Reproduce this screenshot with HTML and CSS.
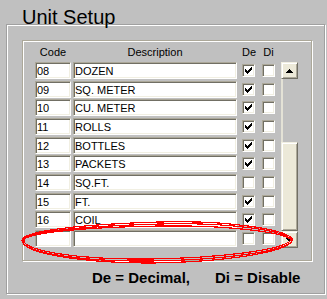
FILE: index.html
```html
<!DOCTYPE html>
<html>
<head>
<meta charset="utf-8">
<link rel="stylesheet" href="styles.css">
</head>
<body>
<div class="title">Unit Setup</div>
<div class="frame">
  <div class="panel">
    <div class="head">
      <span class="h-code">Code</span>
      <span class="h-desc">Description</span>
      <span class="h-chk">De</span>
      <span class="h-chk h-di">Di</span>
    </div>
    <div class="body">
      <div class="rows">
        <div class="row"><span class="inp code">08</span><span class="inp desc">DOZEN</span><span class="chk on"><svg viewBox="0 0 9 9"><path d="M7 1h1v1h-1zM6 2h2v1h-2zM1 3h1v1h-1zM5 3h3v1h-3zM1 4h2v1h-2zM4 4h3v1h-3zM1 5h5v1h-5zM2 6h3v1h-3zM3 7h1v1h-1z"/></svg></span><span class="chk di"></span></div>
        <div class="row"><span class="inp code">09</span><span class="inp desc">SQ. METER</span><span class="chk on"><svg viewBox="0 0 9 9"><path d="M7 1h1v1h-1zM6 2h2v1h-2zM1 3h1v1h-1zM5 3h3v1h-3zM1 4h2v1h-2zM4 4h3v1h-3zM1 5h5v1h-5zM2 6h3v1h-3zM3 7h1v1h-1z"/></svg></span><span class="chk di"></span></div>
        <div class="row"><span class="inp code">10</span><span class="inp desc">CU. METER</span><span class="chk on"><svg viewBox="0 0 9 9"><path d="M7 1h1v1h-1zM6 2h2v1h-2zM1 3h1v1h-1zM5 3h3v1h-3zM1 4h2v1h-2zM4 4h3v1h-3zM1 5h5v1h-5zM2 6h3v1h-3zM3 7h1v1h-1z"/></svg></span><span class="chk di"></span></div>
        <div class="row"><span class="inp code">11</span><span class="inp desc">ROLLS</span><span class="chk on"><svg viewBox="0 0 9 9"><path d="M7 1h1v1h-1zM6 2h2v1h-2zM1 3h1v1h-1zM5 3h3v1h-3zM1 4h2v1h-2zM4 4h3v1h-3zM1 5h5v1h-5zM2 6h3v1h-3zM3 7h1v1h-1z"/></svg></span><span class="chk di"></span></div>
        <div class="row"><span class="inp code">12</span><span class="inp desc">BOTTLES</span><span class="chk on"><svg viewBox="0 0 9 9"><path d="M7 1h1v1h-1zM6 2h2v1h-2zM1 3h1v1h-1zM5 3h3v1h-3zM1 4h2v1h-2zM4 4h3v1h-3zM1 5h5v1h-5zM2 6h3v1h-3zM3 7h1v1h-1z"/></svg></span><span class="chk di"></span></div>
        <div class="row"><span class="inp code">13</span><span class="inp desc">PACKETS</span><span class="chk on"><svg viewBox="0 0 9 9"><path d="M7 1h1v1h-1zM6 2h2v1h-2zM1 3h1v1h-1zM5 3h3v1h-3zM1 4h2v1h-2zM4 4h3v1h-3zM1 5h5v1h-5zM2 6h3v1h-3zM3 7h1v1h-1z"/></svg></span><span class="chk di"></span></div>
        <div class="row"><span class="inp code">14</span><span class="inp desc">SQ.FT.</span><span class="chk"></span><span class="chk di"></span></div>
        <div class="row"><span class="inp code">15</span><span class="inp desc">FT.</span><span class="chk on"><svg viewBox="0 0 9 9"><path d="M7 1h1v1h-1zM6 2h2v1h-2zM1 3h1v1h-1zM5 3h3v1h-3zM1 4h2v1h-2zM4 4h3v1h-3zM1 5h5v1h-5zM2 6h3v1h-3zM3 7h1v1h-1z"/></svg></span><span class="chk di"></span></div>
        <div class="row"><span class="inp code">16</span><span class="inp desc">COIL</span><span class="chk on"><svg viewBox="0 0 9 9"><path d="M7 1h1v1h-1zM6 2h2v1h-2zM1 3h1v1h-1zM5 3h3v1h-3zM1 4h2v1h-2zM4 4h3v1h-3zM1 5h5v1h-5zM2 6h3v1h-3zM3 7h1v1h-1z"/></svg></span><span class="chk di"></span></div>
        <div class="row"><span class="inp code"></span><span class="inp desc"></span><span class="chk"></span><span class="chk di"></span></div>
      </div>
      <div class="scroll">
        <div class="sbtn"><svg viewBox="0 0 13 13"><path d="M6 5h1v1h-1zM5 6h3v1h-3zM4 7h5v1h-5zM3 8h7v1h-7z"/></svg></div>
        <div class="track"></div>
        <div class="thumb"></div>
        <div class="sbtn"><svg viewBox="0 0 13 13"><path d="M3 5h7v1h-7zM4 6h5v1h-5zM5 7h3v1h-3zM6 8h1v1h-1z"/></svg></div>
      </div>
    </div>
  </div>
  <div class="legend"><span>De = Decimal,</span><span>Di = Disable</span></div>
</div>
<svg class="mark" width="327" height="299" viewBox="0 0 327 299">
  <path d="M22 240 C24 230 90 224 160 222 C230 220 290 230 293 240 C286 252 220 260 150 261 C80 262 20 252 22 240 Z"/>
  <path d="M24 240 C26 231 92 226 160 224 C230 222 288 231 291 240 C284 250 220 258 150 259 C82 260 22 251 24 240 Z"/>
  <path d="M23 241 C25 232 92 227 162 226 C232 225 289 233 292 241 C285 253 222 262 152 263 C80 263 22 253 23 241 Z"/>
</svg>
</body>
</html>
```
FILE: styles.css
```css
html, body {
  margin: 0;
  padding: 0;
}
body {
  background: #c0c0c0;
  width: 327px;
  height: 299px;
  overflow: hidden;
  font-family: "Liberation Sans", Arial, sans-serif;
  color: #000;
  position: relative;
}
.title {
  height: 24px;
  line-height: 34px;
  font-size: 20px;
  padding-left: 22px;
  color: #000;
}
.frame {
  box-sizing: border-box;
  margin-left: 6px;
  width: 319px;
  height: 270px;
  border: 1px solid #a0a0a0;
  box-shadow: inset 1px 1px #fff, 1px 1px #fff;
  padding: 15px 0 0 15px;
}
.panel {
  box-sizing: border-box;
  width: 290px;
  height: 221px;
  border: 1px solid #aca899;
  box-shadow: inset 1px 1px #fff, 1px 1px #fff;
  padding: 0 0 0 12px;
}
.head {
  display: flex;
  height: 21px;
  align-items: center;
  font-size: 11px;
}
.head span {
  text-align: center;
}
.h-code { width: 36px; margin-right: 2px; }
.h-desc { width: 164px; margin-right: 5px; }
.h-chk { width: 13px; margin-right: 7px; }
.body {
  display: flex;
}
.rows {
  display: grid;
  grid-auto-rows: 17px;
  row-gap: 1.667px;
}
.row {
  display: flex;
  align-items: center;
}
.inp {
  box-sizing: border-box;
  height: 17px;
  background: #fff;
  border: 1px solid;
  border-color: #aca899 #fff #fff #aca899;
  box-shadow: inset 1px 1px #716f64, inset -1px -1px #f1efe2;
  font-family: "Liberation Sans Narrow", "Arial Narrow", "Liberation Sans", sans-serif;
  font-size: 11px;
  line-height: 15px;
  padding: 1px 0 0 1px;
  white-space: nowrap;
  overflow: hidden;
}
.code { width: 36px; margin-right: 2px; }
.desc { width: 164px; margin-right: 5px; }
.chk {
  box-sizing: border-box;
  width: 13px;
  height: 13px;
  background: #fff;
  border: 1px solid;
  border-color: #aca899 #fff #fff #aca899;
  box-shadow: inset 1px 1px #716f64, inset -1px -1px #f1efe2;
  margin-right: 7px;
  padding: 1px;
}
.chk svg {
  display: block;
  width: 9px;
  height: 9px;
}
.chk.di { margin-right: 6px; }
.scroll {
  width: 17px;
  height: 186px;
  display: flex;
  flex-direction: column;
}
.sbtn {
  box-sizing: border-box;
  height: 17px;
  flex: none;
  background: #ece9d8;
  border: 1px solid;
  border-color: #f1efe2 #716f64 #716f64 #f1efe2;
  box-shadow: inset 1px 1px #fff, inset -1px -1px #aca899;
  padding: 1px;
}
.sbtn svg {
  display: block;
  width: 13px;
  height: 13px;
}
.track {
  height: 63px;
  flex: none;
  box-sizing: border-box;
  background: #c0c0c0;
  border-left: 2px solid #e4e2d6;
}
.thumb {
  flex: 1;
  box-sizing: border-box;
  background: #ece9d8;
  border: 1px solid;
  border-color: #f1efe2 #716f64 #716f64 #f1efe2;
  box-shadow: inset 1px 1px #fff, inset -1px -1px #aca899;
}
.legend {
  margin-top: 7px;
  padding-left: 70px;
  font-size: 15px;
  font-weight: bold;
  line-height: 20px;
  display: flex;
  gap: 25px;
}
.mark {
  position: absolute;
  left: 0;
  top: 0;
  pointer-events: none;
  shape-rendering: crispEdges;
}
.mark path {
  fill: none;
  stroke: #f00;
  stroke-width: 1.2;
}
```
